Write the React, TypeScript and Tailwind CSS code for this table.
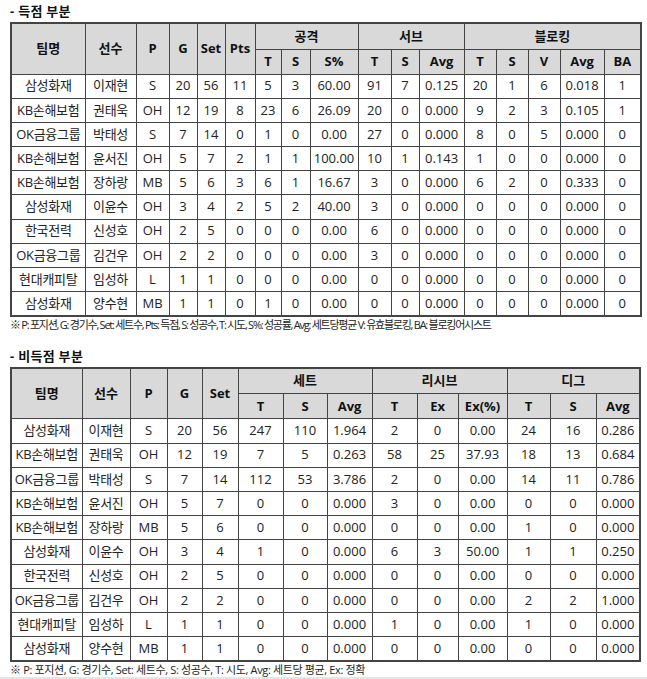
import React from 'react'

const font = { fontFamily: '"Open Sans", "Noto Sans CJK KR", sans-serif' }

type Row = (string | number)[]

const scoring: Row[] = [
  ['삼성화재', '이재현', 'S', 20, 56, 11, 5, 3, '60.00', 91, 7, '0.125', 20, 1, 6, '0.018', 1],
  ['KB손해보험', '권태욱', 'OH', 12, 19, 8, 23, 6, '26.09', 20, 0, '0.000', 9, 2, 3, '0.105', 1],
  ['OK금융그룹', '박태성', 'S', 7, 14, 0, 1, 0, '0.00', 27, 0, '0.000', 8, 0, 5, '0.000', 0],
  ['KB손해보험', '윤서진', 'OH', 5, 7, 2, 1, 1, '100.00', 10, 1, '0.143', 1, 0, 0, '0.000', 0],
  ['KB손해보험', '장하랑', 'MB', 5, 6, 3, 6, 1, '16.67', 3, 0, '0.000', 6, 2, 0, '0.333', 0],
  ['삼성화재', '이윤수', 'OH', 3, 4, 2, 5, 2, '40.00', 3, 0, '0.000', 0, 0, 0, '0.000', 0],
  ['한국전력', '신성호', 'OH', 2, 5, 0, 0, 0, '0.00', 6, 0, '0.000', 0, 0, 0, '0.000', 0],
  ['OK금융그룹', '김건우', 'OH', 2, 2, 0, 0, 0, '0.00', 3, 0, '0.000', 0, 0, 0, '0.000', 0],
  ['현대캐피탈', '임성하', 'L', 1, 1, 0, 0, 0, '0.00', 0, 0, '0.000', 0, 0, 0, '0.000', 0],
  ['삼성화재', '양수현', 'MB', 1, 1, 0, 1, 0, '0.00', 0, 0, '0.000', 0, 0, 0, '0.000', 0],
]

const nonScoring: Row[] = [
  ['삼성화재', '이재현', 'S', 20, 56, 247, 110, '1.964', 2, 0, '0.00', 24, 16, '0.286'],
  ['KB손해보험', '권태욱', 'OH', 12, 19, 7, 5, '0.263', 58, 25, '37.93', 18, 13, '0.684'],
  ['OK금융그룹', '박태성', 'S', 7, 14, 112, 53, '3.786', 2, 0, '0.00', 14, 11, '0.786'],
  ['KB손해보험', '윤서진', 'OH', 5, 7, 0, 0, '0.000', 3, 0, '0.00', 0, 0, '0.000'],
  ['KB손해보험', '장하랑', 'MB', 5, 6, 0, 0, '0.000', 0, 0, '0.00', 1, 0, '0.000'],
  ['삼성화재', '이윤수', 'OH', 3, 4, 1, 0, '0.000', 6, 3, '50.00', 1, 1, '0.250'],
  ['한국전력', '신성호', 'OH', 2, 5, 0, 0, '0.000', 0, 0, '0.00', 0, 0, '0.000'],
  ['OK금융그룹', '김건우', 'OH', 2, 2, 0, 0, '0.000', 0, 0, '0.00', 2, 2, '1.000'],
  ['현대캐피탈', '임성하', 'L', 1, 1, 0, 0, '0.000', 1, 0, '0.00', 1, 0, '0.000'],
  ['삼성화재', '양수현', 'MB', 1, 1, 0, 0, '0.000', 0, 0, '0.00', 0, 0, '0.000'],
]

const th = 'border border-[#444] bg-[#d9d9d9] font-bold text-[13px] text-[#111] p-0 text-center'
const td = 'border border-[#444] text-[13px] text-[#222] p-0 text-center whitespace-nowrap'

function StatTable(props: {
  widths: number[]
  fixed: string[]
  groups: { label: string; cols: string[] }[]
  rows: Row[]
}) {
  const { widths, fixed, groups, rows } = props
  return (
    <table className="table-fixed border-collapse border-2 border-[#444] w-[630px]">
      <colgroup>
        {widths.map((w, i) => (
          <col key={i} style={{ width: w }} />
        ))}
      </colgroup>
      <thead>
        <tr className="h-[26px]">
          {fixed.map((f) => (
            <th key={f} rowSpan={2} className={th}>
              {f}
            </th>
          ))}
          {groups.map((g) => (
            <th key={g.label} colSpan={g.cols.length} className={th}>
              {g.label}
            </th>
          ))}
        </tr>
        <tr className="h-[25px]">
          {groups.flatMap((g) =>
            g.cols.map((c, i) => (
              <th key={g.label + i} className={th}>
                {c}
              </th>
            )),
          )}
        </tr>
      </thead>
      <tbody>
        {rows.map((r, i) => (
          <tr key={i} className="h-[24.2px] bg-white">
            {r.map((v, j) => (
              <td key={j} className={j < 2 ? td + ' tracking-[-0.3px]' : td}>
                {v}
              </td>
            ))}
          </tr>
        ))}
      </tbody>
    </table>
  )
}

export default function App() {
  return (
    <div className="w-[647px] h-[679px] overflow-hidden bg-white px-[10px] border-b-2 border-[#e5e5e5]" style={font}>
      <div className="h-[22px] pt-[2px] text-[13px] font-bold text-[#111] leading-[18px] tracking-[0.3px]">- 득점 부분</div>
      <StatTable
        widths={[74, 51, 33, 28, 28, 30, 26, 29, 48, 33, 28, 45, 32, 32, 32, 44, 37]}
        fixed={['팀명', '선수', 'P', 'G', 'Set', 'Pts']}
        groups={[
          { label: '공격', cols: ['T', 'S', 'S%'] },
          { label: '서브', cols: ['T', 'S', 'Avg'] },
          { label: '블로킹', cols: ['T', 'S', 'V', 'Avg', 'BA'] },
        ]}
        rows={scoring}
      />
      <p className="text-[11px] leading-[16px] text-[#222] tracking-[-1.25px]">
        ※ P: 포지션, G: 경기수, Set: 세트수, Pts: 득점, S: 성공수, T: 시도, S%: 성공률, Avg: 세트당평균 V: 유효블로킹, BA: 블로킹어시스트
      </p>
      <div className="mt-[14px] h-[18px] text-[13px] font-bold text-[#111] leading-[18px] tracking-[0.3px]">- 비득점 부분</div>
      <div className="mt-[2px]">
        <StatTable
          widths={[71, 48, 37, 35, 36, 45, 44, 45, 45, 41, 49, 43, 46, 44]}
          fixed={['팀명', '선수', 'P', 'G', 'Set']}
          groups={[
            { label: '세트', cols: ['T', 'S', 'Avg'] },
            { label: '리시브', cols: ['T', 'Ex', 'Ex(%)'] },
            { label: '디그', cols: ['T', 'S', 'Avg'] },
          ]}
          rows={nonScoring}
        />
      </div>
      <p className="text-[11px] leading-[16px] text-[#222] tracking-[-0.35px]">
        ※ P: 포지션, G: 경기수, Set: 세트수, S: 성공수, T: 시도, Avg: 세트당 평균, Ex: 정확
      </p>
    </div>
  )
}
